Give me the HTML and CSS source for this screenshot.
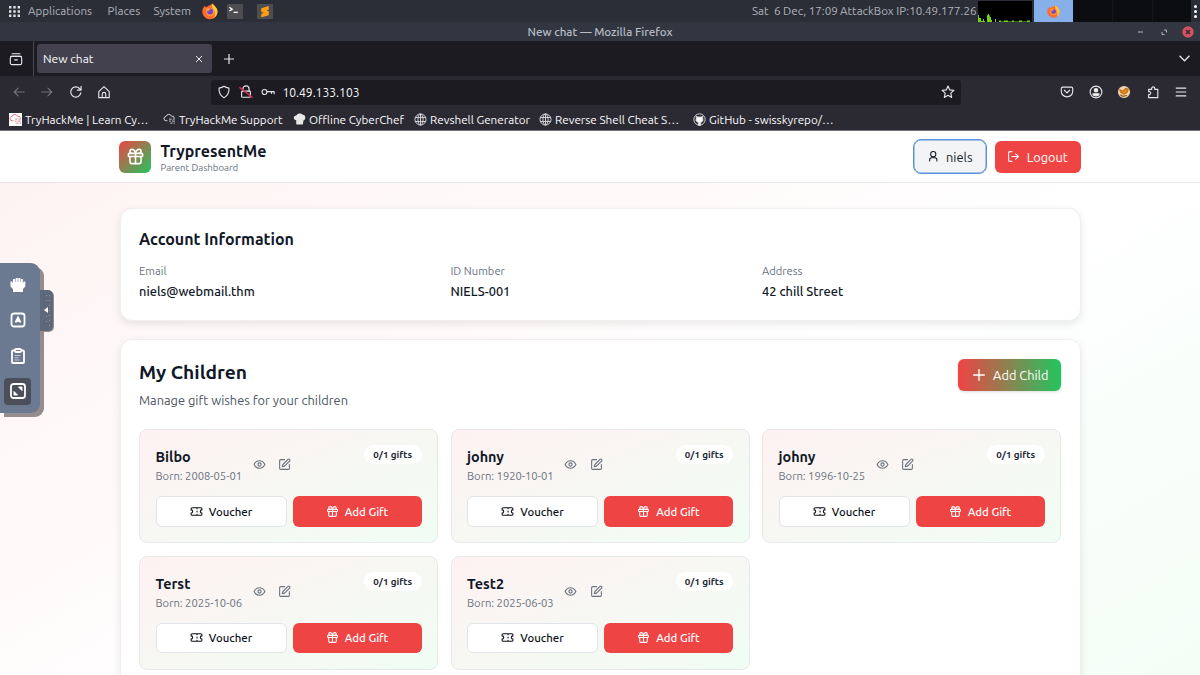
FILE: index.html
```html
<!DOCTYPE html>
<html lang="en">
<head>
  <meta charset="UTF-8" />
  <meta name="viewport" content="width=device-width, initial-scale=1.0"/>
  <title>New chat</title>
  <link rel="stylesheet" href="styles.css">
</head>
<body>
  <svg class="sprite" xmlns="http://www.w3.org/2000/svg">
    <symbol id="gift" viewBox="0 0 24 24"><rect x="3" y="8" width="18" height="4" rx="1"/><path d="M12 8v13M19 12v7a2 2 0 0 1-2 2H7a2 2 0 0 1-2-2v-7M7.500 8a2.500 2.500 0 0 1 0-5C11 3 12 8 12 8s1-5 4.500-5a2.500 2.500 0 0 1 0 5"/></symbol>
    <symbol id="ticket" viewBox="0 0 24 24"><path d="M2 9a3 3 0 0 1 0 6v2a2 2 0 0 0 2 2h16a2 2 0 0 0 2-2v-2a3 3 0 0 1 0-6V7a2 2 0 0 0-2-2H4a2 2 0 0 0-2 2ZM13 5v2M13 17v2M13 11v2"/></symbol>
    <symbol id="eye" viewBox="0 0 24 24"><path d="M2 12s3.500-7 10-7 10 7 10 7-3.500 7-10 7-10-7-10-7Z"/><circle cx="12" cy="12" r="3"/></symbol>
    <symbol id="edit" viewBox="0 0 24 24"><path d="M12 3H5a2 2 0 0 0-2 2v14a2 2 0 0 0 2 2h14a2 2 0 0 0 2-2v-7"/><path d="M18.400 2.600a2.100 2.100 0 0 1 3 3L12 15l-4 1 1-4Z"/></symbol>
    <symbol id="globe" viewBox="0 0 16 16"><circle cx="8" cy="8" r="6.800"/><ellipse cx="8" cy="8" rx="3.200" ry="6.800"/><path d="M8 1v14M1.500 5.500h13M1.500 10.500h13"/></symbol>
    <symbol id="cloud" viewBox="0 0 16 16"><path d="M5.500 9.500H4a2.600 2.600 0 0 1-.3-5.200A3.600 3.600 0 0 1 10.500 4a2.800 2.800 0 0 1 3.500 2.500M7.500 7.500h3M12 7.500h2.500M7.500 10h2M11 10h3.500M9 12.500h2.500M13 12.500h1.500"/></symbol>
    <symbol id="firefox" viewBox="0 0 16 16"><path fill="#ff6b2c" d="M8 1.500C10 1 10.500 0 10.500 0c.5 1.500 4.800 3.500 5 8A7.600 7.600 0 1 1 1.500 4L3 2l.5 2Z"/><path fill="#ffc838" d="M10.500 0c.5 1.500 4.800 3.500 5 8 0 3-1.500 5-3.500 6.300C14 10 12 6 10.500 4.500 9 3 10 1 10.500 0Z"/><circle cx="8" cy="8.500" r="4" fill="#ff9640"/><circle cx="8" cy="8" r="3" fill="#7543c9"/><path fill="#ff9640" d="M3.500 5.500c2-1.500 4-1 5 .8L6 7.500l1 2Z"/></symbol>
  </svg>

  <div class="panel">
    <svg class="apps" viewBox="0 0 12 12"><path d="M0 0h2.600v2.600H0zM4.700 0h2.600v2.600H4.700zM9.400 0H12v2.600H9.400zM0 4.700h2.600v2.600H0zM4.700 4.700h2.600v2.600H4.700zM9.400 4.700H12v2.600H9.400zM0 9.400h2.600V12H0zM4.700 9.400h2.600V12H4.700zM9.400 9.400H12V12H9.400z"/></svg>
    <span class="menu-apps">Applications</span>
    <span class="menu-places">Places</span>
    <span class="menu-system">System</span>
    <svg class="ff"><use href="#firefox"/></svg>
    <svg class="launcher" viewBox="0 0 16 16"><path d="M2 3.500l3 2-3 2M6.500 9H11" fill="none" stroke="#fff" stroke-width="1.400"/></svg>
    <svg class="launcher sublime" viewBox="0 0 16 16"><path d="M4 4.500L12 2v4L9.500 7l2.500.8V12l-8 2v-3.500l3-1-3-1z" fill="#ff9f1a"/></svg>
    <div class="tray">
      <span class="date">Sat&nbsp; 6 Dec, 17:09</span>
      <span class="ip">AttackBox IP:10.49.177.26</span>
      <svg class="graph" viewBox="0 0 54 21"><path d="M0 21v-7h1v3h2v3h2v-2h1v2h1v1zM9 21v-6l1-2h1l1 3h1v3h1v2zM17 21v-3h1v3zM21 21v-1.500h2v1h3v-1h4v1h4v-1h2v1h5v-1h3v1h5v-1h3v1.500z" fill="#73d216"/></svg>
      <div class="task"><svg viewBox="0 0 16 16"><use href="#firefox"/></svg></div>
      <div class="tasks-empty"></div>
      <div class="dots"><i></i><i></i><i></i></div>
    </div>
  </div>

  <div class="titlebar">
    <span>New chat — Mozilla Firefox</span>
    <div class="window-buttons">
      <svg viewBox="0 0 56 12"><path d="M-2 6h5M24 4h2.500v2.500M24.500 8.500H22V6" fill="none" stroke="#aeb3bd" stroke-width="1"/><circle cx="48" cy="6" r="5.700" fill="#d5515f"/><path d="M46 4l4 4M50 4l-4 4" stroke="#35262e" stroke-width="1.500"/></svg>
    </div>
  </div>

  <div class="tabbar">
    <div class="view"><svg class="ico" viewBox="0 0 16 16"><path d="M2 5h12M3.500 2h9M6.500 9h3"/><rect x="1.500" y="5" width="13" height="9.500" rx="2"/></svg></div>
    <div class="tab"><span>New chat</span><svg class="close" viewBox="0 0 8 8"><path d="M1 1l6 6M7 1L1 7"/></svg></div>
    <svg class="plus" viewBox="0 0 10 10"><path d="M5 0v10M0 5h10"/></svg>
    <svg class="chevron" viewBox="0 0 10 6"><path d="M.5.500L5 5 9.500.500"/></svg>
  </div>

  <div class="navbar">
    <div class="nav-left">
      <svg class="ico dim" viewBox="0 0 16 16"><path d="M14 8H3M7 3.500L2.500 8 7 12.500"/></svg>
      <svg class="ico dim" viewBox="0 0 16 16"><path d="M2 8h11M9 3.500L13.500 8 9 12.500"/></svg>
      <svg class="ico" viewBox="0 0 16 16"><path d="M13.500 9A5.800 5.800 0 1 1 12 4l1.500 1.500M13.800 1.500v4.300H9.500"/></svg>
      <svg class="ico" viewBox="0 0 16 16"><path d="M2 7.500L8 1.800l6 5.700V14.500H2ZM6 14.500v-4a2 2 0 0 1 4 0v4"/></svg>
    </div>
    <div class="urlbar">
      <svg class="ico" viewBox="0 0 16 16"><path d="M8 1.500C6 3 4 3.300 2.300 3.500 2 9 4 12.500 8 14.500c4-2 6-5.500 5.700-11C12 3.300 10 3 8 1.500Z"/></svg>
      <svg class="ico" viewBox="0 0 16 16"><path d="M4.500 7V4.500a3.500 3.500 0 0 1 7 0V7"/><rect x="3" y="7" width="10" height="7" rx="1"/><path d="M1 3l14 11" stroke="#e22850" stroke-width="1.700"/></svg>
      <svg class="ico" viewBox="0 0 16 16"><circle cx="4" cy="8" r="2.800"/><path d="M7 7.500h8v2.500M12 7.500v2"/></svg>
      <span>10.49.133.103</span>
      <svg class="ico star" viewBox="0 0 16 16"><path d="M8 1.200l2 4.400 4.700.5-3.500 3.200 1 4.900L8 11.800l-4.200 2.400 1-4.900L1.300 6.100l4.700-.5Z"/></svg>
    </div>
    <div class="nav-right">
      <svg class="ico" viewBox="0 0 16 16"><path d="M3 2.500h10a1.500 1.500 0 0 1 1.500 1.500v3.500a6.500 6 0 0 1-13 0V4A1.500 1.500 0 0 1 3 2.500ZM5 6l3 3 3-3"/></svg>
      <svg class="ico" viewBox="0 0 16 16"><circle cx="8" cy="8" r="6.700"/><circle cx="8" cy="6" r="2" fill="#eee"/><path d="M4.500 10h7c0 1.500-1.800 2.500-3.500 2.500S4.500 11.500 4.500 10Z" fill="#eee"/></svg>
      <svg class="ico" viewBox="0 0 16 16"><circle cx="8" cy="8" r="6.300" fill="#efd9b4" stroke="#e6cfaa"/><path d="M3 5.500l3.500 1.500L10 4l3 .5-1.500 4L8 10.500 4.500 8.500Z" fill="#e08a1c" stroke="#c9741a"/><path d="M4 11.500l3 1.500 4-1" stroke="#9c5a18"/></svg>
      <svg class="ico" viewBox="0 0 16 16"><path d="M3 5h3.500V3.500a1.800 1.800 0 0 1 3.500 0V5h3.500v9.500H3V11h1a1.800 1.800 0 0 0 0-3.500H3Z"/></svg>
      <svg class="ico" viewBox="0 0 16 16"><path d="M2.500 3.500h11M2.500 8h11M2.500 12.500h11"/></svg>
    </div>
  </div>

  <div class="bookmarks">
    <div class="bm bm1"><svg class="thm" viewBox="0 0 16 16"><use href="#cloud"/></svg><span>TryHackMe | Learn Cy…</span></div>
    <div class="bm bm2"><svg viewBox="0 0 16 16"><use href="#cloud"/></svg><span>TryHackMe Support</span></div>
    <div class="bm bm3"><svg viewBox="0 0 16 16"><path d="M4 14V9C0 8 0 3 4 3c2-3 6-3 8-1 4 0 4 6 1 7l-1 5Z" fill="#e8e8e8" stroke="none"/></svg><span>Offline CyberChef</span></div>
    <div class="bm bm4"><svg viewBox="0 0 16 16"><use href="#globe"/></svg><span>Revshell Generator</span></div>
    <div class="bm bm5"><svg viewBox="0 0 16 16"><use href="#globe"/></svg><span>Reverse Shell Cheat S…</span></div>
    <div class="bm bm6"><svg viewBox="0 0 16 16"><circle cx="8" cy="8" r="7" fill="#2b2a33"/><path d="M4 4l2 1h4l2-1v3c1 3-1 4-2.500 4.300V15h-3v-3.700C5 11 3 10 4 7Z" fill="#fff"/></svg><span>GitHub - swisskyrepo/…</span></div>
  </div>

  <div class="page">
    <header class="header">
      <div class="logo"><svg class="line"><use href="#gift"/></svg></div>
      <div class="brand">
        <h1>TrypresentMe</h1>
        <p>Parent Dashboard</p>
      </div>
      <button class="user"><svg class="line" viewBox="0 0 24 24"><circle cx="12" cy="8" r="5"/><path d="M19 21v-2a4 4 0 0 0-4-4H9a4 4 0 0 0-4 4v2"/></svg><span>niels</span></button>
      <button class="logout"><svg class="line" viewBox="0 0 24 24"><path d="M9 21H5a2 2 0 0 1-2-2V5a2 2 0 0 1 2-2h4M16 17l5-5-5-5M21 12H9"/></svg><span>Logout</span></button>
    </header>

    <main>
      <section class="card account">
        <h2>Account Information</h2>
        <div class="info">
          <div><p>Email</p><strong>niels@webmail.thm</strong></div>
          <div><p>ID Number</p><strong>NIELS-001</strong></div>
          <div><p>Address</p><strong>42 chill Street</strong></div>
        </div>
      </section>

      <section class="card children">
        <div class="children-head">
          <div>
            <h2>My Children</h2>
            <p>Manage gift wishes for your children</p>
          </div>
          <button class="add-child"><svg class="line" viewBox="0 0 24 24"><path d="M4 12h16M12 4v16"/></svg><span>Add Child</span></button>
        </div>
        <div class="grid">
          <div class="child">
            <div class="child-top">
              <div class="who"><h3>Bilbo</h3><p>Born: 2008-05-01</p></div>
              <div class="actions"><svg class="line"><use href="#eye"/></svg><svg class="line"><use href="#edit"/></svg></div>
              <span class="badge">0/1 gifts</span>
            </div>
            <div class="buttons">
              <button class="voucher"><svg class="line"><use href="#ticket"/></svg><span>Voucher</span></button>
              <button class="gift"><svg class="line"><use href="#gift"/></svg><span>Add Gift</span></button>
            </div>
          </div>
          <div class="child">
            <div class="child-top">
              <div class="who"><h3>johny</h3><p>Born: 1920-10-01</p></div>
              <div class="actions"><svg class="line"><use href="#eye"/></svg><svg class="line"><use href="#edit"/></svg></div>
              <span class="badge">0/1 gifts</span>
            </div>
            <div class="buttons">
              <button class="voucher"><svg class="line"><use href="#ticket"/></svg><span>Voucher</span></button>
              <button class="gift"><svg class="line"><use href="#gift"/></svg><span>Add Gift</span></button>
            </div>
          </div>
          <div class="child">
            <div class="child-top">
              <div class="who"><h3>johny</h3><p>Born: 1996-10-25</p></div>
              <div class="actions"><svg class="line"><use href="#eye"/></svg><svg class="line"><use href="#edit"/></svg></div>
              <span class="badge">0/1 gifts</span>
            </div>
            <div class="buttons">
              <button class="voucher"><svg class="line"><use href="#ticket"/></svg><span>Voucher</span></button>
              <button class="gift"><svg class="line"><use href="#gift"/></svg><span>Add Gift</span></button>
            </div>
          </div>
          <div class="child">
            <div class="child-top">
              <div class="who"><h3>Terst</h3><p>Born: 2025-10-06</p></div>
              <div class="actions"><svg class="line"><use href="#eye"/></svg><svg class="line"><use href="#edit"/></svg></div>
              <span class="badge">0/1 gifts</span>
            </div>
            <div class="buttons">
              <button class="voucher"><svg class="line"><use href="#ticket"/></svg><span>Voucher</span></button>
              <button class="gift"><svg class="line"><use href="#gift"/></svg><span>Add Gift</span></button>
            </div>
          </div>
          <div class="child">
            <div class="child-top">
              <div class="who"><h3>Test2</h3><p>Born: 2025-06-03</p></div>
              <div class="actions"><svg class="line"><use href="#eye"/></svg><svg class="line"><use href="#edit"/></svg></div>
              <span class="badge">0/1 gifts</span>
            </div>
            <div class="buttons">
              <button class="voucher"><svg class="line"><use href="#ticket"/></svg><span>Voucher</span></button>
              <button class="gift"><svg class="line"><use href="#gift"/></svg><span>Add Gift</span></button>
            </div>
          </div>
        </div>
      </section>
    </main>
  </div>

  <!-- remote desktop control bar -->
  <div class="vnc">
    <div class="vnc-bar">
      <div class="vnc-btn"><svg viewBox="0 0 16 16"><path d="M3 15v-3L.5 9.500V4.500h2V6h.5V2h2.200v3h.5V1h2v4h.6V1h2v4h.5V2h2v4h.5V4.500h2v5L13 12v3Z" fill="#fff" stroke="none"/></svg></div>
      <div class="vnc-btn"><svg viewBox="0 0 16 16"><rect x="1.500" y="1.500" width="13" height="13" rx="2.500"/><path d="M5.500 10.500L8 5.500l2.500 5M6.500 9h3"/></svg></div>
      <div class="vnc-btn"><svg viewBox="0 0 16 16"><rect x="2" y="2.500" width="12" height="12.500" rx="1"/><rect x="5" y="1" width="6" height="3" rx="1" fill="#6b7a91"/><path d="M4.500 7.500h6M4.500 9.800h4M4.500 12h5" stroke-width=".6"/></svg></div>
      <div class="vnc-btn selected"><svg viewBox="0 0 16 16"><rect x="1" y="1" width="14" height="14" rx="2.500"/><path d="M8.500 4H12v3.500zM4 8.500V12h3.500z" fill="#fff" stroke-width="1"/></svg></div>
    </div>
    <div class="vnc-handle"><svg viewBox="0 0 12 40"><path d="M6.500 5v9M6.500 26v9M9.500 5v32" stroke="#8f98a8" stroke-dasharray="1 4"/><path d="M8 17v6l-4-3z" fill="#fff"/></svg></div>
  </div>
</body>
</html>
```
FILE: styles.css
```css
* {
  box-sizing: border-box;
}

body {
  margin: 0;
  width: 1200px;
  height: 675px;
  overflow: hidden;
  font-family: Ubuntu, 'Noto Sans', sans-serif;
  font-size: 12px;
  color: #111827;
  white-space: nowrap;
  position: relative;
}

h1, h2, h3, p {
  margin: 0;
}

svg {
  flex: none;
  display: block;
}

.sprite {
  display: none;
}

/* desktop panel */
.panel {
  height: 22px;
  background: #2b2e37;
  color: #b0b4bb;
  display: flex;
  align-items: center;
  font-size: 11.6px;
  padding-left: 9px;
}

.panel span {
  line-height: 18px;
  padding-bottom: 1px;
}

.apps {
  width: 11px;
  height: 11px;
  fill: #dfe2e6;
  margin-right: 8px;
}

.menu-apps { width: 79.5px; }
.menu-places { width: 46px; }
.menu-system { width: 48.5px; }

.ff {
  width: 16px;
  height: 17px;
}

.launcher {
  width: 16px;
  height: 15px;
  background: #4e4e50;
  margin-left: 9px;
}

.sublime {
  margin-left: 14px;
}

.tray {
  margin-left: auto;
  display: flex;
  align-items: center;
  height: 22px;
}

.date { width: 88px; }
.ip { width: 138px; }

.graph {
  width: 54px;
  height: 21px;
  background: #000;
}

.task {
  width: 39px;
  height: 22px;
  margin-left: 2px;
  background: #87b0ea;
  display: flex;
  align-items: center;
  justify-content: center;
}

.task svg {
  width: 13px;
  height: 13px;
}

.tasks-empty {
  width: 118px;
  height: 22px;
  background: repeating-linear-gradient(to right, #0c0d10 0 39px, #15171b 39px 40px);
}

.dots {
  width: 9px;
  display: flex;
  flex-direction: column;
  align-items: center;
  gap: 2px;
}

.dots i {
  width: 3px;
  height: 3px;
  border-radius: 50%;
  background: #fff;
}

.titlebar {
  height: 19px;
  background: #323641;
  color: #b8bdc6;
  font-size: 11.6px;
  font-weight: 500;
  display: grid;
  grid-template-columns: 1fr auto 1fr;
  align-items: center;
}

.titlebar span {
  grid-column: 2;
}

.window-buttons {
  display: flex;
  justify-content: flex-end;
  padding-right: 4px;
}

.window-buttons svg {
  width: 56px;
  height: 12px;
  overflow: visible;
}

/* browser chrome */
.tabbar {
  height: 35px;
  background: #1c1b22;
  display: flex;
  align-items: center;
  color: #fbfbfe;
}

.ico {
  width: 14px;
  height: 14px;
  fill: none;
  stroke: #e6e6ea;
  stroke-width: 1.3;
  stroke-linecap: round;
  stroke-linejoin: round;
}

.dim {
  stroke: #73727c;
}

.view {
  width: 34px;
  height: 35px;
  border-right: 1px solid #4a4952;
  display: flex;
  align-items: center;
  padding-left: 9px;
}

.tab {
  width: 175px;
  height: 29px;
  margin-left: 3px;
  padding: 0 9px 0 6px;
  background: #42414d;
  border-radius: 3px;
  display: flex;
  align-items: center;
  justify-content: space-between;
  font-size: 12px;
}

.close, .plus, .chevron {
  fill: none;
  stroke: #e6e6ea;
  stroke-width: 1.2;
}

.close {
  width: 8px;
  height: 8px;
  stroke-width: 1;
}

.plus {
  width: 10px;
  height: 10px;
  margin-left: 12px;
}

.chevron {
  width: 11px;
  height: 7px;
  margin-left: auto;
  margin-right: 10px;
}

.navbar {
  height: 32px;
  background: #2b2a33;
  display: flex;
  align-items: center;
}

.nav-left {
  width: 211px;
  padding-left: 12px;
  display: flex;
  gap: 14.4px;
}

.urlbar {
  width: 750px;
  height: 25px;
  background: #1c1b22;
  border-radius: 3px;
  display: flex;
  align-items: center;
  gap: 7.8px;
  padding: 0 6px;
  color: #fbfbfe;
  font-size: 12.1px;
}

.urlbar .star {
  margin-left: auto;
}

.nav-right {
  margin-left: 99px;
  display: flex;
  gap: 14.5px;
}

.bookmarks {
  height: 23px;
  background: #2b2a33;
  border-bottom: 1px solid #77767f;
  display: flex;
  align-items: center;
  padding-left: 9px;
  color: #fbfbfe;
  font-size: 11.7px;
}

.bm {
  display: flex;
  align-items: center;
  gap: 3px;
}

.bm svg {
  width: 13px;
  height: 13px;
  fill: none;
  stroke: #d6d6da;
  stroke-width: 1.2;
}

.bm .thm {
  background: #fff;
  stroke: #d8737c;
}

.bm1 { width: 154px; }
.bm2 { width: 130px; }
.bm3 { width: 121px; }
.bm4 { width: 125px; }
.bm5 { width: 154px; }

/* dashboard */
.page {
  height: 544px;
  overflow: hidden;
  background: linear-gradient(to bottom right, #fef2f2, #fff 50%, #f0fdf4) 0 0 / 100% 700px;
}

.header {
  height: 52px;
  background: #fff;
  border-bottom: 1px solid #e5e7eb;
  padding: 0 119.5px 0 119px;
  display: flex;
  align-items: center;
}

.line {
  fill: none;
  stroke: currentColor;
  stroke-width: 2;
  stroke-linecap: round;
  stroke-linejoin: round;
  width: 13px;
  height: 13px;
}

.logo {
  width: 32px;
  height: 32px;
  border-radius: 6px;
  background: linear-gradient(to bottom right, #ef4444, #22c55e);
  color: #fff;
  display: flex;
  align-items: center;
  justify-content: center;
}

.logo svg {
  width: 19px;
  height: 19px;
}

.brand {
  margin-left: 9.5px;
  margin-right: auto;
  padding-top: 2px;
}

.brand h1 {
  font-size: 16px;
  line-height: 20px;
}

.brand p {
  font-size: 9.6px;
  line-height: 13px;
  color: #6b7280;
}

button {
  font-family: inherit;
  border: none;
  padding: 0;
  display: flex;
  align-items: center;
  justify-content: center;
}

.user {
  width: 74px;
  height: 35px;
  border: 1px solid #5b94dc;
  box-shadow: inset 0 0 0 0.5px #5b94dc;
  border-radius: 8px;
  background: #f3f4f6;
  color: #111827;
  font-size: 12.8px;
  gap: 7px;
}

.user svg {
  width: 12.5px;
  height: 12.5px;
}

.logout {
  width: 86px;
  height: 32px;
  margin-left: 8px;
  border-radius: 6px;
  background: #ef4444;
  color: #fff;
  font-size: 12.8px;
  gap: 6.5px;
}

main {
  padding: 25px 119.5px 0;
}

.card {
  background: #fff;
  border: 1px solid #f1eef0;
  border-radius: 12px;
  box-shadow: 0 3px 8px rgba(0, 0, 0, 0.09);
}

.account {
  height: 113px;
  padding: 18.5px;
}

.account h2 {
  font-size: 16px;
  line-height: 23px;
}

.info {
  display: grid;
  grid-template-columns: repeat(3, 1fr);
  gap: 12.5px;
  margin-top: 11.5px;
}

.info p {
  font-size: 11.2px;
  line-height: 18px;
  color: #6b7280;
}

.info strong {
  display: block;
  font-size: 12.8px;
  font-weight: 500;
  line-height: 22px;
}

.children {
  margin-top: 18px;
  height: 500px;
  padding: 19px 18.5px;
}

.children-head {
  display: flex;
  justify-content: space-between;
  align-items: flex-start;
  height: 70px;
}

.children-head h2 {
  font-size: 19.2px;
  line-height: 26px;
}

.children-head p {
  font-size: 12.8px;
  line-height: 20px;
  margin-top: 5px;
  color: #4b5563;
}

.add-child {
  width: 103px;
  height: 32px;
  border-radius: 6px;
  background: linear-gradient(to right, #ef4444, #22c55e);
  color: #fff;
  font-size: 12.8px;
  gap: 6.5px;
  box-shadow: 0 1px 3px rgba(0, 0, 0, 0.15);
}

.add-child svg {
  width: 16px;
  height: 16px;
}

.grid {
  display: grid;
  grid-template-columns: repeat(3, 1fr);
  gap: 12.5px;
}

.child {
  height: 114px;
  padding: 15px 15.5px;
  border: 1px solid #e8e9ea;
  border-radius: 8px;
  background: linear-gradient(to bottom right, #fef2f2, #f0fdf4);
}

.child-top {
  display: flex;
  height: 51px;
}

.who {
  width: 97px;
}

.who h3 {
  font-size: 14.4px;
  line-height: 24px;
}

.who p {
  font-size: 11.2px;
  line-height: 15px;
  color: #6b7280;
}

.actions {
  display: flex;
  gap: 12.5px;
  padding-top: 13px;
  color: #6b7280;
}

.badge {
  margin-left: auto;
  width: 57.5px;
  height: 19px;
  border-radius: 10px;
  background: #fff;
  color: #1f2937;
  font-size: 9.8px;
  font-weight: 600;
  line-height: 20px;
  text-align: center;
}

.buttons {
  display: grid;
  grid-template-columns: 131px 1fr;
  gap: 6px;
}

.buttons button {
  height: 30.5px;
  border-radius: 6px;
  font-size: 11.4px;
  font-weight: 500;
  gap: 6px;
}

.voucher {
  background: #fff;
  border: 1px solid #e2e5e8;
  color: #0b0f19;
}

.gift {
  background: #ef4444;
  color: #fff;
}

/* floating control bar lies over the page */
.vnc {
  position: absolute;
  left: 0;
  top: 263px;
  display: flex;
  align-items: flex-start;
}

.vnc-bar {
  width: 40px;
  height: 150px;
  padding: 8px 0 0 4px;
  border-radius: 0 9px 9px 0;
  background: #6b7a91;
  box-shadow: 4px 4px 0 #948c8e;
  display: flex;
  flex-direction: column;
  gap: 8px;
}

.vnc-btn {
  width: 27px;
  height: 27.5px;
  border-radius: 4px;
  display: flex;
  align-items: center;
  justify-content: center;
}

.vnc-btn svg {
  width: 16px;
  height: 16px;
  fill: none;
  stroke: #fff;
  stroke-width: 1.8;
}

.selected {
  background: #4a4f5b;
}

.vnc-handle {
  width: 13px;
  height: 41px;
  margin-top: 27px;
  border-radius: 0 5px 5px 0;
  background: #5e687b;
  box-shadow: 1px 1px 0 #948c8e;
}

.vnc-handle svg {
  width: 12px;
  height: 40px;
}
```
